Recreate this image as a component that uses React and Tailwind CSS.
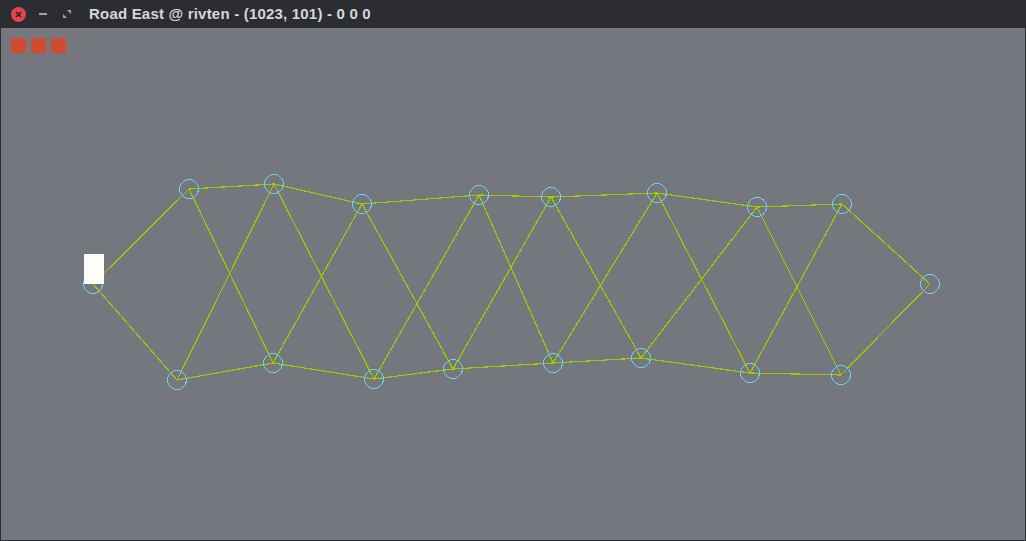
import React from "react";

const top = [
  [189, 189], [274, 184], [362, 204], [479, 195], [551, 197], [657, 193], [757, 207], [842, 204],
];
const bottom = [
  [177, 380], [273, 363], [374, 379], [453, 369], [553, 363], [641, 358], [750, 373], [841, 375],
];
const left = [93, 284];
const right = [930, 284];

function buildEdges() {
  const e = [];
  const t = [left, ...top, right];
  const b = [left, ...bottom, right];
  for (let i = 0; i < t.length - 1; i++) e.push([t[i], t[i + 1]]);
  for (let i = 0; i < b.length - 1; i++) e.push([b[i], b[i + 1]]);
  for (let i = 0; i < top.length - 1; i++) {
    e.push([top[i], bottom[i + 1]]);
    e.push([bottom[i], top[i + 1]]);
  }
  return e;
}

const edges = buildEdges();
const nodes = [left, ...top, ...bottom, right];

export default function App() {
  return (
    <div className="w-[1026px] h-[541px] flex flex-col bg-[#2c2d32] overflow-hidden">
      {/* Title bar */}
      <div className="h-[28px] shrink-0 flex items-center pl-[11px]">
        <div className="w-[15px] h-[15px] rounded-full bg-[#e2474b] flex items-center justify-center">
          <svg width="7" height="7" viewBox="0 0 7 7">
            <path d="M1 1L6 6M6 1L1 6" stroke="#3a1c1e" strokeWidth="1.6" />
          </svg>
        </div>
        <div className="w-[8px] h-[2px] bg-[#a3a4a8] ml-[13px]" />
        <svg width="8" height="8" viewBox="0 0 8 8" className="ml-[16px]">
          <path d="M4 0H8V4Z M0 4V8H4Z" fill="#a3a4a8" />
        </svg>
        <span className="ml-[18px] text-[15px] font-bold text-[#d6d6d6] font-['Liberation_Sans',sans-serif] tracking-[0.2px]">
          Road East @ rivten - (1023, 101) - 0 0 0
        </span>
      </div>

      {/* Game canvas */}
      <div className="flex-1 mx-px mb-px bg-[#75777f]">
        <svg width="1024" height="512" viewBox="1 28 1024 512" shapeRendering="crispEdges">
          <rect x="11" y="38" width="15" height="15" fill="#d24a2f" />
          <rect x="31" y="38" width="15" height="15" fill="#d24a2f" />
          <rect x="51" y="38" width="15" height="15" fill="#d24a2f" />
          {edges.map(([a, b], i) => (
            <line key={i} x1={a[0]} y1={a[1]} x2={b[0]} y2={b[1]} stroke="#9ccb00" strokeWidth="1.2" />
          ))}
          {nodes.map(([x, y], i) => (
            <circle key={i} cx={x} cy={y} r="9.5" fill="none" stroke="#6cd0f5" strokeWidth="1" />
          ))}
          <rect x="84" y="254" width="20" height="30" fill="#fefef8" />
        </svg>
      </div>
    </div>
  );
}
